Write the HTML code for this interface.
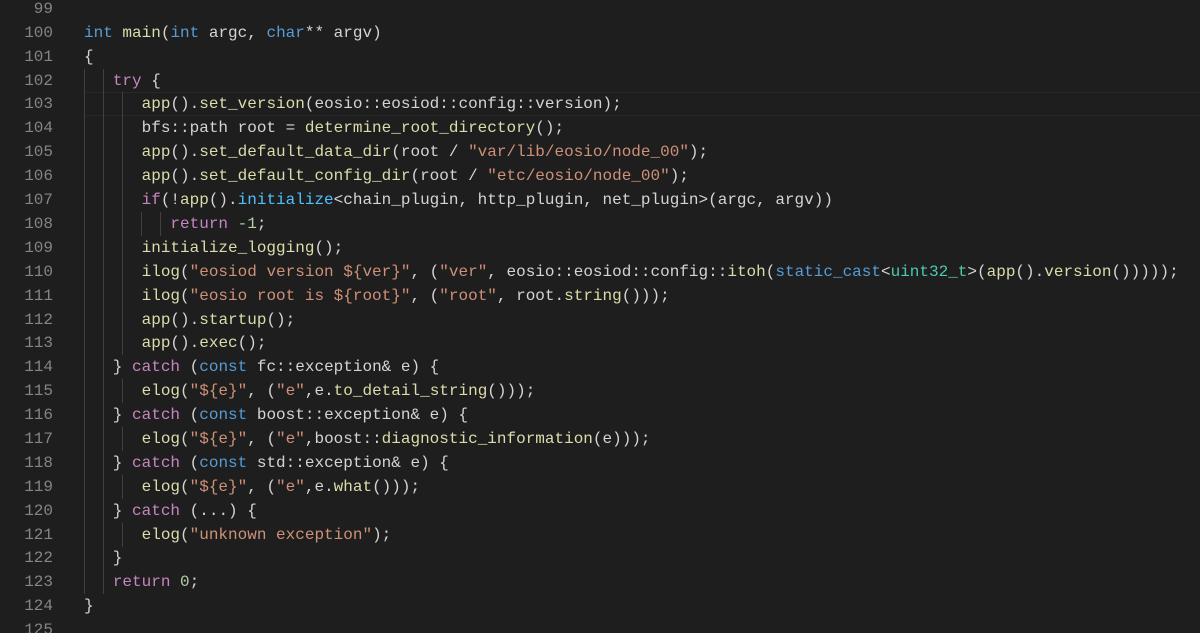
<!DOCTYPE html>
<html><head><meta charset="utf-8"><style>
html,body{margin:0;padding:0;background:#1e1e1e;width:1200px;height:633px;overflow:hidden;position:relative}
.r{position:absolute;left:0;height:24px;width:1200px;font:16px "Liberation Mono",monospace;line-height:24px;white-space:pre}
.ln{position:absolute;left:0;width:53px;text-align:right;color:#858585}
.c{position:absolute;left:84px;color:#d4d4d4}
.k{color:#569cd6}.p{color:#c586c0}.f{color:#dcdcaa}.s{color:#ce9178}.n{color:#b5cea8}.t{color:#4ec9b0}.i{color:#4fc1ff}
.g{position:absolute;width:1px;background:#404040}
.cur{position:absolute;left:84px;right:0;top:92px;height:22px;border:1px solid #282828;border-right:none}
</style></head><body>
<div class="cur"></div>
<div class="g" style="left:84px;top:69px;height:525px"></div>
<div class="g" style="left:103px;top:69px;height:525px"></div>
<div class="g" style="left:122px;top:92px;height:263px"></div>
<div class="g" style="left:122px;top:379px;height:24px"></div>
<div class="g" style="left:122px;top:427px;height:24px"></div>
<div class="g" style="left:122px;top:475px;height:24px"></div>
<div class="g" style="left:122px;top:523px;height:24px"></div>
<div class="g" style="left:141px;top:212px;height:24px"></div>
<div class="g" style="left:160px;top:212px;height:24px"></div>
<div class="r" style="top:-3px"><span class="ln">99</span></div>
<div class="r" style="top:21px"><span class="ln">100</span><span class="c"><span class="k">int</span> <span class="f">main</span>(<span class="k">int</span> argc, <span class="k">char</span>** argv)</span></div>
<div class="r" style="top:45px"><span class="ln">101</span><span class="c">{</span></div>
<div class="r" style="top:69px"><span class="ln">102</span><span class="c">   <span class="p">try</span> {</span></div>
<div class="r" style="top:92px"><span class="ln">103</span><span class="c">      <span class="f">app</span>().<span class="f">set_version</span>(eosio::eosiod::config::version);</span></div>
<div class="r" style="top:116px"><span class="ln">104</span><span class="c">      bfs::path root = <span class="f">determine_root_directory</span>();</span></div>
<div class="r" style="top:140px"><span class="ln">105</span><span class="c">      <span class="f">app</span>().<span class="f">set_default_data_dir</span>(root / <span class="s">"var/lib/eosio/node_00"</span>);</span></div>
<div class="r" style="top:164px"><span class="ln">106</span><span class="c">      <span class="f">app</span>().<span class="f">set_default_config_dir</span>(root / <span class="s">"etc/eosio/node_00"</span>);</span></div>
<div class="r" style="top:188px"><span class="ln">107</span><span class="c">      <span class="p">if</span>(!<span class="f">app</span>().<span class="i">initialize</span>&lt;chain_plugin, http_plugin, net_plugin&gt;(argc, argv))</span></div>
<div class="r" style="top:212px"><span class="ln">108</span><span class="c">         <span class="p">return</span> <span class="n">-1</span>;</span></div>
<div class="r" style="top:236px"><span class="ln">109</span><span class="c">      <span class="f">initialize_logging</span>();</span></div>
<div class="r" style="top:260px"><span class="ln">110</span><span class="c">      <span class="f">ilog</span>(<span class="s">"eosiod version ${ver}"</span>, (<span class="s">"ver"</span>, eosio::eosiod::config::<span class="f">itoh</span>(<span class="k">static_cast</span>&lt;<span class="t">uint32_t</span>&gt;(<span class="f">app</span>().<span class="f">version</span>()))));</span></div>
<div class="r" style="top:284px"><span class="ln">111</span><span class="c">      <span class="f">ilog</span>(<span class="s">"eosio root is ${root}"</span>, (<span class="s">"root"</span>, root.<span class="f">string</span>()));</span></div>
<div class="r" style="top:308px"><span class="ln">112</span><span class="c">      <span class="f">app</span>().<span class="f">startup</span>();</span></div>
<div class="r" style="top:331px"><span class="ln">113</span><span class="c">      <span class="f">app</span>().<span class="f">exec</span>();</span></div>
<div class="r" style="top:355px"><span class="ln">114</span><span class="c">   } <span class="p">catch</span> (<span class="k">const</span> fc::exception&amp; e) {</span></div>
<div class="r" style="top:379px"><span class="ln">115</span><span class="c">      <span class="f">elog</span>(<span class="s">"${e}"</span>, (<span class="s">"e"</span>,e.<span class="f">to_detail_string</span>()));</span></div>
<div class="r" style="top:403px"><span class="ln">116</span><span class="c">   } <span class="p">catch</span> (<span class="k">const</span> boost::exception&amp; e) {</span></div>
<div class="r" style="top:427px"><span class="ln">117</span><span class="c">      <span class="f">elog</span>(<span class="s">"${e}"</span>, (<span class="s">"e"</span>,boost::<span class="f">diagnostic_information</span>(e)));</span></div>
<div class="r" style="top:451px"><span class="ln">118</span><span class="c">   } <span class="p">catch</span> (<span class="k">const</span> std::exception&amp; e) {</span></div>
<div class="r" style="top:475px"><span class="ln">119</span><span class="c">      <span class="f">elog</span>(<span class="s">"${e}"</span>, (<span class="s">"e"</span>,e.<span class="f">what</span>()));</span></div>
<div class="r" style="top:499px"><span class="ln">120</span><span class="c">   } <span class="p">catch</span> (...) {</span></div>
<div class="r" style="top:523px"><span class="ln">121</span><span class="c">      <span class="f">elog</span>(<span class="s">"unknown exception"</span>);</span></div>
<div class="r" style="top:546px"><span class="ln">122</span><span class="c">   }</span></div>
<div class="r" style="top:570px"><span class="ln">123</span><span class="c">   <span class="p">return</span> <span class="n">0</span>;</span></div>
<div class="r" style="top:594px"><span class="ln">124</span><span class="c">}</span></div>
<div class="r" style="top:618px"><span class="ln">125</span></div>
</body></html>
